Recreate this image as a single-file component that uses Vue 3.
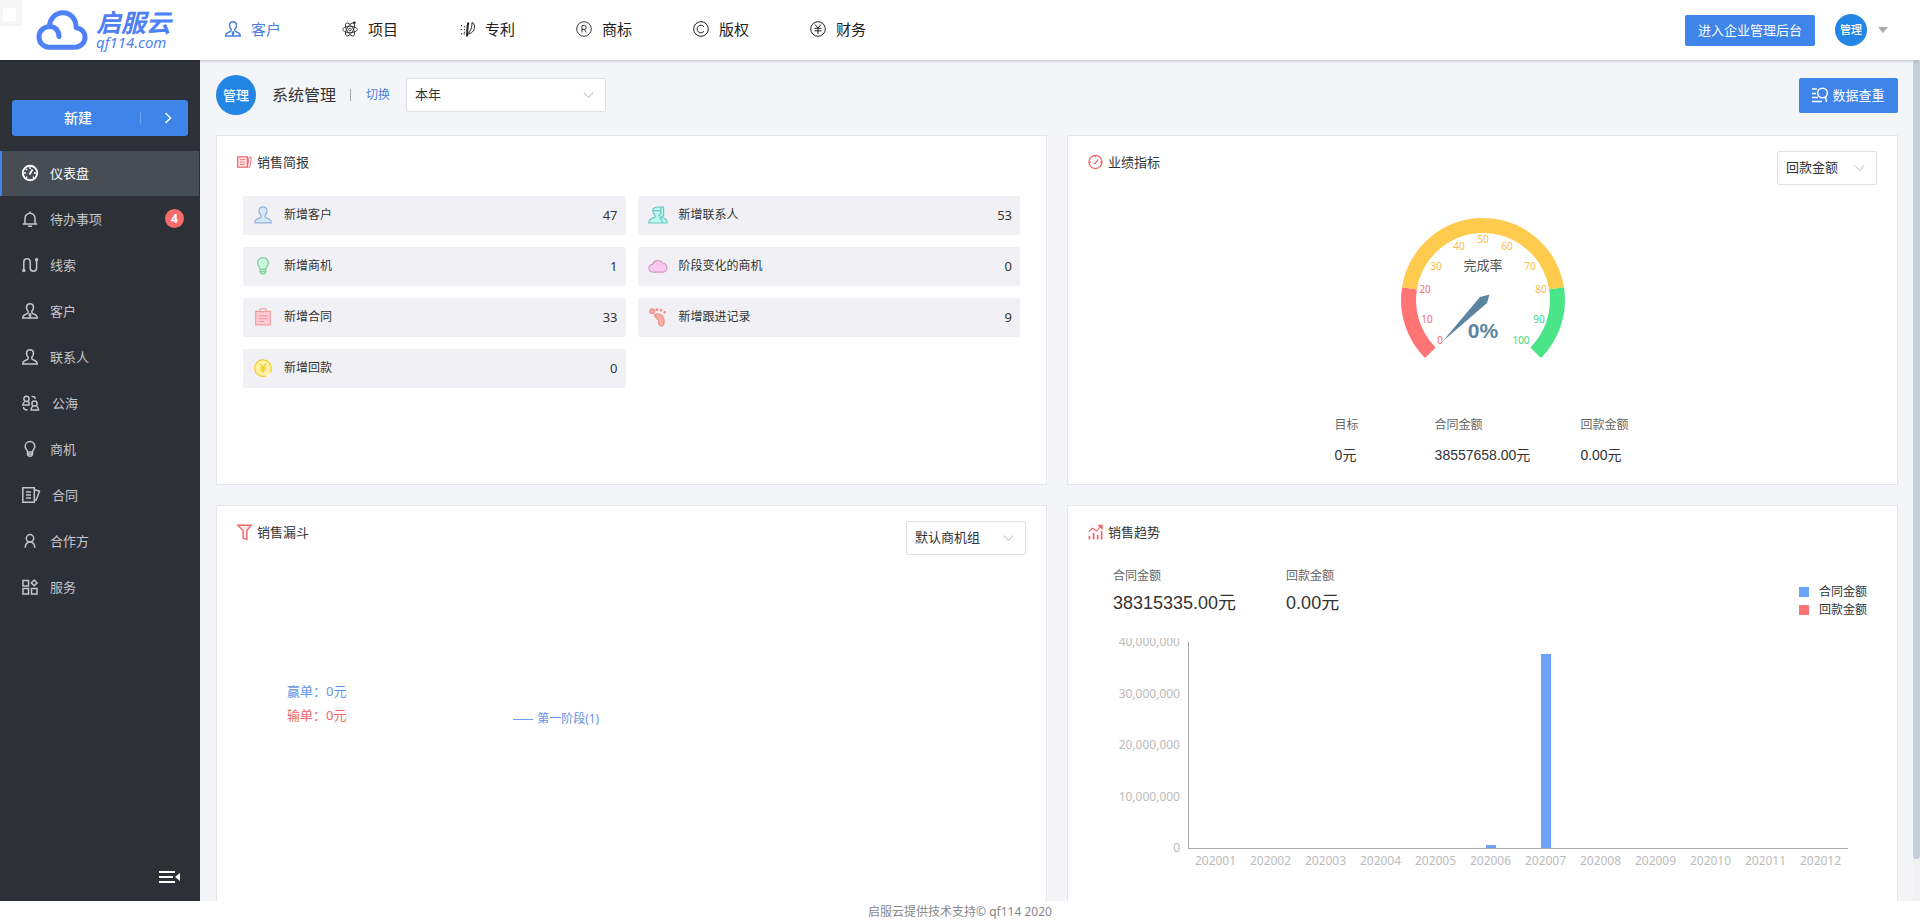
<script setup>
import { ref } from 'vue'

const person = '<path d="M4.700 3Q5.300.8 8 .8T11.300 3c.5 2.200-.2 4-1.500 5.200v1.300q0 .7 1 1.100c2.600.9 4.500 1.400 4.500 4.400H.7c0-3 1.900-3.500 4.500-4.400q1-.4 1-1.100V8.200C4.900 7 4.200 5.200 4.700 3z"/>'

const icons = {
  client: person + '<path d="M8 10v3.500M7 11.300l1 2.700 1-2.700"/>',
  contact: person,
  atom: '<g stroke-width=".8"><ellipse cx="8" cy="8.500" rx="7.300" ry="3.200"/><ellipse cx="8" cy="8.500" rx="7.300" ry="3.200" transform="rotate(60 8 8.500)"/><ellipse cx="8" cy="8.500" rx="7.300" ry="3.200" transform="rotate(120 8 8.500)"/><circle cx="8" cy="8.500" r="1.400"/><circle cx="12.300" cy="1.800" r="1" fill="currentColor"/></g>',
  patent: '<path stroke-width="2" d="M9.500 1.500C8 5 8.500 10 8 15.500"/><path stroke-width="1" d="M8 13.500c4.500-1 7.500-3.500 7.500-7.500 0-2.500-1-4-2.500-4.500C13 6 12 10.500 8 13.500"/><path stroke-width="1.200" stroke-dasharray="1.200 2" d="M6 6L1 4M6 8.500H0M6 11l-4 2M5.500 12.500L4 15"/>',
  trade: '<g stroke-width=".9"><circle cx="8" cy="8" r="7.300"/><path d="M6 11.500v-7h2.300a1.900 1.900 0 0 1 0 3.900H6M8.300 8.400l2 3.100"/></g>',
  copy: '<g stroke-width="1"><circle cx="8" cy="8" r="7.300"/><path d="M11 10.200a3.800 3.800 0 1 1 0-4.400"/></g>',
  yen: '<g stroke-width="1"><circle cx="8" cy="8" r="7.300"/><path d="M5 3.500l3 3.500 3-3.500M8 7v6M4.500 7.300h7M4.500 9.800h7"/></g>',
  dash: '<circle cx="8" cy="8" r="7.200" stroke-width="1.900"/><path d="M8 2v2M2 8h2M12 8h2M3.800 3.800l1.200 1.200M4 12.200h1.200M10.800 12.200H12" stroke-width="1.400"/><path d="M7.500 9.500l3-5" stroke-width="1.800"/>',
  bell: '<path d="M.8 13h14.400M3 13V7.300a5 5 0 0 1 10 0V13M8 2.300V.5M6 15.200h4"/>',
  clue: '<path d="M1.800 13V5a3.200 3.200 0 0 1 6.400 0v6a3.200 3.200 0 0 0 6.400 0V3"/><circle cx="1.800" cy="13.500" r="1"/><circle cx="14.600" cy="2.800" r="1"/>',
  sea: '<circle cx="4.500" cy="3.800" r="2.600"/><path d="M3 6.500C1.500 7.500.8 8.500.8 10H7V7.500L6 6.500"/><circle cx="12.500" cy="8.500" r="2.600"/><path d="M11 11c-1.500 1-2 2-2 4h7.500c0-2-.5-3-2-4M9.500 1.500c2.500-.5 3.500.7 3.800 2.500M1.500 12c0 2 1.200 3 4 3"/>',
  bulb: '<path d="M5.500 11c0-2-2.300-3-2.300-5.600a4.800 4.800 0 0 1 9.600 0C12.800 8 10.500 9 10.500 11zM5.500 11v2.500q.5 1.700 2.500 1.700t2.500-1.700V11M5.500 13h5"/>',
  contract: '<path d="M.8.800h11.500v14.400H.8zM12.300 2.500l5.200 1.800-3.300 8.700h-1.900M4 5h5M4 8h5M4 11h5"/>',
  partner: '<circle cx="8" cy="5.300" r="3.700"/><path d="M3.300 14.800c0-3 1.300-5.800 4.700-5.800s4.700 2.800 4.700 5.800"/>',
  service: '<path d="M1 1.500h5.500V7H1zM1 9.500h5.500V15H1zM9.500 9.500H15V15H9.500z"/><path d="M12.200 1l2.900 2.900-2.900 2.900-2.900-2.900z"/>',
  report: '<path fill="#fdeeee" d="M.8 2.500h10.200v11H.8z"/><path d="M11 13.500L13 3h2.300l-1.500 10.500zM3.200 5.500h5.300M3.200 8h5.300M3.200 10.500h5.300" stroke-width="1"/>',
  target: '<circle cx="8" cy="8" r="7"/><path d="M7.500 9.500L11 5.500M8 1v2M15 8h-2M1 8h2M6 9.500h2.500"/>',
  funnel: '<path fill="#fdeeee" stroke-width="1.500" d="M.8.800h14.400L10.500 6.500V16L6.500 14.500v-8z"/>',
  trend: '<path stroke-width="1.800" d="M1.500 12v4M6 9v7M10.300 11v5M14.500 7v9"/><path stroke-width="1.200" d="M1 7.500l4-3.500 4 3L14 1.500"/><path fill="currentColor" d="M11.500 1H15v3.500z"/>',
  women: '<path fill="#b9fbf3" d="M4.500 2.500Q6 .8 9 .8h5v8q-1.500.2-2.500 1.200c3.500 1 5.800 1.500 5.800 5.200H.7c0-3.200 2-4 5.300-5q.8-.4.8-1.200C5 7.500 4 5 4.500 2.500z"/><path d="M11.500 1v5.500Q10.500 9 8.800 9M4.500 4h7M11 9.500v1.500q0 1 1.200 1.500.8 1 .8 2.500"/>',
  cloud: '<path fill="#fbc9ef" d="M4.500 13.500a3.500 3.500 0 0 1-.4-7A5 5 0 0 1 13 5.300a4.200 4.200 0 0 1 1 8.200z"/>',
  clip: '<path fill="#fdcdd2" d="M1.500 3h13v12h-13z"/><path fill="#fff" d="M5.500.8h5v2.400h-5z"/><path d="M4 7h8M4 9.500h8M4 12h5"/>',
  foot: '<path fill="#fbb0a8" d="M5 6C8 4.500 12 5.500 13 9s.3 7-2 7-2.500-2.500-2.500-4.500S4.500 8.500 5 6z"/><circle cx="2.800" cy="2.800" r="2" fill="#fbb0a8"/><g fill="currentColor" stroke="none"><circle cx="7" cy="1.600" r="1.300"/><circle cx="10.800" cy="2" r="1.200"/><circle cx="14" cy="3.700" r="1.100"/></g>',
  coin: '<path fill="#fff1a5" d="M10.500 15A7.300 7.300 0 1 1 15.200 9v3"/><path d="M5.500 4.500L8 7.500l2.500-3M8 7.500v5M5.500 8h5M5.500 10h5" stroke-width="1.300"/>'
}

const nav = [
  { icon: 'client', label: '客户', active: true },
  { icon: 'atom', label: '项目' },
  { icon: 'patent', label: '专利' },
  { icon: 'trade', label: '商标' },
  { icon: 'copy', label: '版权' },
  { icon: 'yen', label: '财务' }
]

const menu = [
  { icon: 'dash', label: '仪表盘', active: true },
  { icon: 'bell', label: '待办事项', badge: 4 },
  { icon: 'clue', label: '线索' },
  { icon: 'client', label: '客户' },
  { icon: 'contact', label: '联系人' },
  { icon: 'sea', label: '公海', wide: true },
  { icon: 'bulb', label: '商机' },
  { icon: 'contract', label: '合同', wide: true },
  { icon: 'partner', label: '合作方' },
  { icon: 'service', label: '服务' }
]

const brief = [
  { icon: 'contact', label: '新增客户', value: 47, tone: 'blue' },
  { icon: 'women', label: '新增联系人', value: 53, tone: 'teal', wide: true },
  { icon: 'bulb', label: '新增商机', value: 1, tone: 'green' },
  { icon: 'cloud', label: '阶段变化的商机', value: 0, tone: 'pink', wide: true },
  { icon: 'clip', label: '新增合同', value: 33, tone: 'rose' },
  { icon: 'foot', label: '新增跟进记录', value: 9, tone: 'coral' },
  { icon: 'coin', label: '新增回款', value: 0, tone: 'gold' }
]

const goals = [
  { label: '目标', value: '0元' },
  { label: '合同金额', value: '38557658.00元' },
  { label: '回款金额', value: '0.00元' }
]

const ticks = [
  { t: 0, x: 57, y: 140, c: 'low' },
  { t: 10, x: 44, y: 119, c: 'low' },
  { t: 20, x: 42, y: 89, c: 'low' },
  { t: 30, x: 53, y: 66, c: 'mid' },
  { t: 40, x: 76, y: 46, c: 'mid' },
  { t: 50, x: 100, y: 39, c: 'mid' },
  { t: 60, x: 124, y: 46, c: 'mid' },
  { t: 70, x: 147, y: 66, c: 'mid' },
  { t: 80, x: 158, y: 89, c: 'mid' },
  { t: 90, x: 156, y: 119, c: 'high' },
  { t: 100, x: 138, y: 140, c: 'high' }
]

// Angles run clockwise from twelve o'clock, in degrees.
function arc(from, to) {
  const r = 74.5
  const at = (a) => {
    const k = (a * Math.PI) / 180
    return (100 + r * Math.sin(k)).toFixed(2) + ' ' + (100 - r * Math.cos(k)).toFixed(2)
  }
  return `M${at(from)}A${r} ${r} 0 ${to - from > 180 ? 1 : 0} 1 ${at(to)}`
}

const axisMax = 40000000
const yLabels = ['40,000,000', '30,000,000', '20,000,000', '10,000,000', '0']
const amounts = [0, 0, 0, 0, 0, 600000, 37715335, 0, 0, 0, 0, 0]
const months = amounts.map((amount, i) => ({
  name: '2020' + String(i + 1).padStart(2, '0'),
  amount,
  height: (amount / axisMax) * 100 + '%'
}))

const period = ref('本年')
const metric = ref('回款金额')
const group = ref('默认商机组')
</script>

<template>
  <div class="page">
    <header class="top">
      <span class="handle" aria-hidden="true"></span>
      <a class="logo" href="#">
        <svg class="logo-mark" viewBox="0 0 52 40" fill="none" stroke="#5080f5" stroke-width="5" stroke-linecap="round" stroke-linejoin="round" aria-hidden="true">
          <path d="M23 26.500C23 20.500 19 16.500 14 16.500c-6 0-11 4.500-11 10.200C3 33 7.500 37.200 13 37.200h26c5.500 0 10-4.200 10-9.700 0-5.200-3.500-9.300-9-9.800C40.500 9 34.500 2.800 27 2.800S14 8.500 13.500 16" />
        </svg>
        <span class="logo-text">
          <strong>启服云</strong>
          <em>qf114.com</em>
        </span>
      </a>
      <nav class="nav">
        <a v-for="n in nav" :key="n.label" href="#" :class="{ on: n.active }">
          <svg class="ico" viewBox="0 0 16 16" aria-hidden="true" v-html="icons[n.icon]"></svg>
          <span>{{ n.label }}</span>
        </a>
      </nav>
      <button class="primary admin" type="button">进入企业管理后台</button>
      <button class="user" type="button">
        <span class="avatar small">管理</span>
        <span class="caret"></span>
      </button>
    </header>

    <div class="body">
      <aside class="side">
        <button class="create" type="button">
          <span class="create-label">新建</span>
          <span class="create-more">
            <svg viewBox="0 0 8 12" width="8" height="12" fill="none" stroke="#fff" stroke-width="1.400" aria-hidden="true"><path d="M1.500 1l5 5-5 5" /></svg>
          </span>
        </button>
        <nav class="menu">
          <a v-for="m in menu" :key="m.label" href="#" :class="{ on: m.active }">
            <svg class="ico" :class="{ wide: m.wide }" :viewBox="m.wide ? '0 0 18 16' : '0 0 16 16'" aria-hidden="true" v-html="icons[m.icon]"></svg>
            <span>{{ m.label }}</span>
            <b v-if="m.badge" class="badge">{{ m.badge }}</b>
          </a>
        </nav>
        <button class="fold" type="button" aria-label="收起菜单">
          <svg viewBox="0 0 22 14" width="22" height="14" fill="none" stroke="#fff" stroke-width="2" aria-hidden="true">
            <path d="M0 2h16M0 7h14M0 12h16" /><path d="M21 3v8l-5-4z" fill="#fff" stroke="none" />
          </svg>
        </button>
      </aside>

      <main class="main">
        <div class="toolbar">
          <span class="avatar">管理</span>
          <span class="who">系统管理</span>
          <span class="bar"></span>
          <a class="switch" href="#">切换</a>
          <span class="pick period">
            <select v-model="period" aria-label="时间范围"><option>本年</option></select>
            <svg viewBox="0 0 12 8" aria-hidden="true"><path d="M1 1.500l5 5 5-5" /></svg>
          </span>
          <button class="primary check" type="button">
            <svg viewBox="0 0 16 16" width="16" height="16" fill="none" stroke="#fff" stroke-width="1.500" aria-hidden="true">
              <path d="M0 2h5M0 6.500h4M0 10.500h6M0 14.500h10M13.500 10l1 5" /><circle cx="10.500" cy="6" r="4.800" />
            </svg>
            <span>数据查重</span>
          </button>
        </div>

        <div class="cards">
          <section class="card">
            <div class="head">
              <h2><svg class="ico" viewBox="0 0 16 16" aria-hidden="true" v-html="icons.report"></svg>销售简报</h2>
            </div>
            <ul class="brief">
              <li v-for="b in brief" :key="b.label" :class="b.tone">
                <svg class="ico" :viewBox="b.wide ? '0 0 18 16' : '0 0 16 16'" aria-hidden="true" v-html="icons[b.icon]"></svg>
                <span>{{ b.label }}</span>
                <b>{{ b.value }}</b>
              </li>
            </ul>
          </section>

          <section class="card">
            <div class="head">
              <h2><svg class="ico" viewBox="0 0 16 16" aria-hidden="true" v-html="icons.target"></svg>业绩指标</h2>
              <span class="pick metric">
                <select v-model="metric" aria-label="业绩指标类型"><option>回款金额</option></select>
                <svg viewBox="0 0 12 8" aria-hidden="true"><path d="M1 1.500l5 5 5-5" /></svg>
              </span>
            </div>
            <svg class="gauge" viewBox="0 0 200 200" width="200" height="200" role="img" aria-label="完成率 0%">
              <g fill="none" stroke-width="15">
                <path :d="arc(-135, -81)" stroke="#ff7474" />
                <path :d="arc(-81, 81)" stroke="#ffcb4f" />
                <path :d="arc(81, 135)" stroke="#4ae588" />
              </g>
              <text v-for="k in ticks" :key="k.t" :x="k.x" :y="k.y + 4" :class="['tick', k.c]">{{ k.t }}</text>
              <text class="gauge-name" x="100" y="70">完成率</text>
              <path d="M59.500 141.500L97 97l9.500-2.500L104 103z" fill="#5b84a0" />
              <text class="gauge-value" x="100" y="138">0%</text>
            </svg>
            <dl class="goals">
              <div v-for="g in goals" :key="g.label"><dt>{{ g.label }}</dt><dd>{{ g.value }}</dd></div>
            </dl>
          </section>

          <section class="card tall">
            <div class="head">
              <h2><svg class="ico" viewBox="0 0 16 16" aria-hidden="true" v-html="icons.funnel"></svg>销售漏斗</h2>
              <span class="pick group">
                <select v-model="group" aria-label="商机组"><option>默认商机组</option></select>
                <svg viewBox="0 0 12 8" aria-hidden="true"><path d="M1 1.500l5 5 5-5" /></svg>
              </span>
            </div>
            <div class="funnel">
              <div class="result">
                <p class="win">赢单：0元</p>
                <p class="lose">输单：0元</p>
              </div>
              <p class="stage"><i></i>第一阶段(1)</p>
            </div>
          </section>

          <section class="card tall">
            <div class="head">
              <h2><svg class="ico" viewBox="0 0 16 16" aria-hidden="true" v-html="icons.trend"></svg>销售趋势</h2>
            </div>
            <div class="totals">
              <dl>
                <div><dt>合同金额</dt><dd>38315335.00元</dd></div>
                <div><dt>回款金额</dt><dd>0.00元</dd></div>
              </dl>
              <ul class="legend">
                <li><i class="blue-box"></i>合同金额</li>
                <li><i class="red-box"></i>回款金额</li>
              </ul>
            </div>
            <div class="chart">
              <ol class="ylabels"><li v-for="y in yLabels" :key="y">{{ y }}</li></ol>
              <div class="plot">
                <div class="bars">
                  <div v-for="m in months" :key="m.name" class="slot">
                    <i v-if="m.amount" :style="{ height: m.height }"></i>
                  </div>
                </div>
                <div class="months"><span v-for="m in months" :key="m.name">{{ m.name }}</span></div>
              </div>
            </div>
          </section>
        </div>
        <div class="track" aria-hidden="true"><span></span></div>
      </main>
    </div>
    <footer class="foot">启服云提供技术支持© qf114 2020</footer>
  </div>
</template>

<style>
body { margin: 0; }
</style>

<style scoped>
.page {
  display: flex;
  flex-direction: column;
  height: 100vh;
  background: #fff;
  color: #333;
  font: 13px/20px "Noto Sans", "Noto Sans CJK SC", sans-serif;
}
.page * { box-sizing: border-box; }
a { color: inherit; text-decoration: none; }
button, select { font: inherit; color: inherit; border: 0; padding: 0; background: none; cursor: pointer; }
ul, ol, dl, dd, p, h2 { margin: 0; padding: 0; list-style: none; font-weight: 400; }
.ico { width: 16px; height: 16px; flex: none; fill: none; stroke: currentColor; stroke-width: 1.4; overflow: visible; }

.top {
  position: relative;
  z-index: 2;
  flex: none;
  display: flex;
  align-items: center;
  height: 60px;
  padding-right: 32px;
  box-shadow: 0 1px 3px rgba(0, 0, 0, .2);
}
.handle {
  position: absolute;
  left: 0;
  top: 0;
  width: 22px;
  height: 26px;
  border: solid #f6f6f6;
  border-width: 8px 6px 5px 3px;
}
.logo { display: flex; align-items: center; width: 224px; padding-left: 36px; color: #5080f5; }
.logo-mark { width: 52px; height: 40px; margin-right: 8px; }
.logo-text { display: flex; flex-direction: column; }
.logo-text strong { font-size: 25px; line-height: 24px; font-style: italic; font-weight: 700; white-space: nowrap; }
.logo-text em { font-size: 15px; line-height: 16px; }
.nav { display: flex; flex: 1; gap: 60px; margin-left: 1px; padding-bottom: 2px; font-size: 15px; color: #222; }
.nav a { display: flex; align-items: center; gap: 10px; width: 57px; white-space: nowrap; }
.nav .on { color: #4a7fe0; }
.primary { background: #3e84e9; color: #fff; border-radius: 2px; }
.admin { width: 130px; height: 31px; margin-right: 20px; }
.user { display: flex; align-items: center; gap: 11px; }
.avatar {
  display: flex;
  align-items: center;
  justify-content: center;
  width: 40px;
  height: 40px;
  border-radius: 50%;
  background: #2486e4;
  color: #fff;
  font-size: 13px;
  font-weight: 500;
}
.avatar.small { width: 32px; height: 32px; font-size: 11px; }
.caret { border: solid transparent; border-width: 6px 5px 0; border-top-color: #aaa; }

.body { flex: 1; min-height: 0; display: flex; }
.side { flex: none; display: flex; flex-direction: column; width: 200px; padding-top: 40px; background: #2d3037; }
.create {
  display: flex;
  align-items: center;
  height: 36px;
  margin: 0 12px 15px;
  border-radius: 3px;
  background: #3e84e9;
  color: #fff;
  font-size: 14px;
  font-weight: 500;
}
.create-label { flex: 1; padding-left: 4px; }
.create-more { display: flex; justify-content: center; width: 48px; border-left: 1px solid #6ea3f0; line-height: 12px; }
.create-more svg { margin-left: 6px; }
.menu { display: flex; flex-direction: column; gap: 1px; color: #c3c6cb; }
.menu a { display: flex; align-items: center; height: 45px; margin-right: 1px; padding: 0 15px 2px 20px; border-left: 2px solid transparent; }
.menu .ico { margin-right: 12px; stroke-width: 1.5; }
.menu .ico.wide { width: 18px; }
.menu .on { background: #464d55; border-color: #3e84e9; color: #fff; }
.badge {
  width: 19px;
  height: 19px;
  margin-left: auto;
  border-radius: 50%;
  background: #f56c6c;
  color: #fff;
  font-size: 12px;
  line-height: 19px;
  text-align: center;
}
.fold { margin: auto 19px 17px auto; line-height: 0; }

.main { position: relative; flex: 1; min-width: 0; overflow: hidden; padding: 0 22px 0 16px; background: #f4f5f9; }
.toolbar { display: flex; align-items: center; height: 75px; padding-bottom: 5px; }
.who { margin-left: 16px; font-size: 16px; }
.bar { width: 1px; height: 12px; margin: 0 15px 0 14px; background: #aaa; }
.switch { margin-right: 16px; font-size: 12px; color: #4a7fd8; }
.pick { position: relative; flex: none; display: block; height: 34px; }
.pick select {
  width: 100%;
  height: 100%;
  padding: 0 0 2px 8px;
  appearance: none;
  border: 1px solid #dcdfe6;
  border-radius: 2px;
  background: #fff;
}
.pick svg { position: absolute; right: 12px; top: 13px; width: 11px; height: 8px; fill: none; stroke: #c0c4cc; stroke-width: 1.1; pointer-events: none; }
.period { width: 200px; }
.metric { width: 100px; }
.group { width: 120px; }
.check { display: flex; align-items: center; justify-content: center; gap: 4px; width: 99px; height: 35px; margin-left: auto; }

.cards { display: grid; grid-template-columns: 1fr 1fr; gap: 20px; }
.card { min-width: 0; height: 350px; padding: 15px 20px; border: 1px solid #e4e6ea; background: #fff; }
.tall { height: 420px; }
.head { display: flex; justify-content: space-between; height: 34px; }
.head h2 { display: flex; align-items: center; gap: 5px; height: 22px; font-size: 13px; line-height: 22px; }
.head h2 .ico { width: 15px; color: #f0676b; }

.brief { display: grid; grid-template-columns: 1fr 1fr; gap: 12px; margin: 11px 6px 0; }
.brief li { display: flex; align-items: center; height: 39px; padding: 0 8px 2px 10px; border-radius: 2px; background: #f1f1f5; font-size: 12px; }
.brief .ico { width: 20px; height: 18px; margin-right: 11px; stroke-width: 1.1; }
.brief span { color: #333; }
.brief b { margin-left: auto; font-size: 13px; font-weight: 400; color: #333; }
.blue .ico { color: #94b2dc; fill: #d7e9fd; }
.teal .ico { color: #72c5bf; }
.green .ico { color: #81c99a; fill: #c8fadb; }
.pink .ico { color: #d09bc5; }
.rose .ico { color: #f39ca5; }
.coral .ico { color: #f58d84; }
.gold .ico { color: #f1ce32; }

.gauge { display: block; margin: 15px auto 0; font-family: "Noto Sans", "Noto Sans CJK SC", sans-serif; text-anchor: middle; }
.tick { font-size: 10px; }
.low { fill: #f56c6c; }
.mid { fill: #f5bd45; }
.high { fill: #3dd67a; }
.gauge-name { font-size: 13px; fill: #555; }
.gauge-value { font: 700 21px "Liberation Sans", sans-serif; fill: #5b84a0; }
.goals { display: flex; justify-content: center; gap: 50px; margin-top: 15px; }
.goals div { min-width: 50px; }
dt { font-size: 12px; line-height: 20px; color: #666; }
dd { font: 14px/20px "Liberation Sans", "Noto Sans CJK SC", sans-serif; }
.goals dd { margin-top: 10px; }

.funnel { display: grid; grid-template-columns: 35% 1fr; align-items: start; padding-top: 124px; }
.result { padding-left: 50px; line-height: 24px; }
.win, .stage { color: #6495e8; }
.lose { color: #f0676b; }
.stage { display: flex; align-items: center; gap: 4px; margin-top: 28px; font-size: 12px; line-height: 24px; }
.stage i { width: 20px; height: 1px; background: #6ca2fb; }

.totals { display: flex; justify-content: space-between; margin: 11px 10px 0 25px; }
.totals dl { display: flex; gap: 50px; }
.totals dd { margin-top: 5px; font-size: 18px; line-height: 24px; }
.legend { padding-top: 17px; font-size: 12px; line-height: 18px; }
.legend li { display: flex; align-items: center; gap: 10px; }
.legend i { width: 10px; height: 10px; }
.blue-box { background: #6ca2fb; }
.red-box { background: #ff7474; }
.chart { display: flex; gap: 8px; margin: 19px 29px 0 25px; padding-top: 4px; overflow: hidden; font-size: 12px; color: #bbb; }
.ylabels { display: flex; flex-direction: column; justify-content: space-between; width: 67px; height: 206px; text-align: right; }
.ylabels li { height: 0; line-height: 0; }
.plot { flex: 1; min-width: 0; }
.bars { display: flex; height: 207px; border: solid #aaa; border-width: 0 0 1px 1px; }
.slot { flex: 1; display: flex; align-items: flex-end; justify-content: center; }
.slot i { width: 10px; background: #6ca2fb; }
.months { display: flex; padding-top: 4px; line-height: 16px; }
.months span { flex: 1; text-align: center; }

.track { position: absolute; right: 0; top: 0; bottom: 0; width: 7px; background: #f1f1f1; }
.track span { display: block; height: 95%; border-radius: 4px; background: #c6ced9; }
.foot { flex: none; height: 20px; padding-top: 1px; text-align: center; font-size: 12px; line-height: 20px; color: #888; }
</style>
